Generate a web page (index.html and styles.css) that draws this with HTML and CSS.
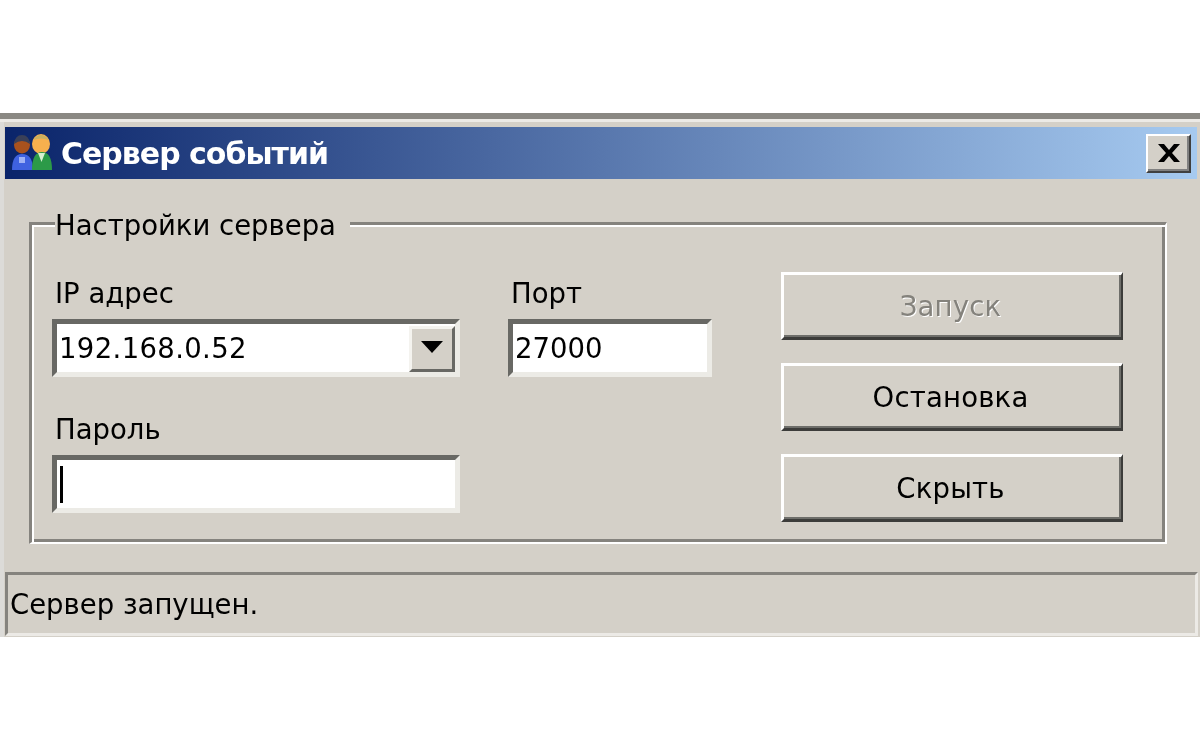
FILE: index.html
```html
<!DOCTYPE html>
<html lang="ru">
<head>
<meta charset="utf-8">
<title>Сервер событий</title>
<link rel="stylesheet" href="styles.css">
</head>
<body>
<div class="window">
  <div class="titlebar">
    <svg class="appicon" viewBox="0 0 42 38" width="42" height="38">
      <ellipse cx="10" cy="12" rx="8" ry="8.5" fill="#a8521e"/>
      <path d="M2 11 Q3 2 10 2 Q17 2 18 11 Q10 5 2 11Z" fill="#3a4058"/>
      <path d="M0 37 Q0 21 10 21 Q21 21 21 37Z" fill="#3f62e0"/>
      <path d="M7 24h6v6H7z" fill="#9fb2f5"/>
      <ellipse cx="29" cy="11" rx="9" ry="10" fill="#f7b04e"/>
      <path d="M21 7 Q29 -3 37 7 Q29 4 21 7Z" fill="#c8b060"/>
      <path d="M20 37 Q20 19 30 19 Q40 19 40 37Z" fill="#2c9a48"/>
      <path d="M26 20h7l-3.500 9z" fill="#d8f0d0"/>
    </svg>
    <span class="title">Сервер событий</span>
    <div class="close"><svg viewBox="0 0 24 20" width="24" height="20"><path d="M1 1h6l5 6 5-6h6l-8 9 8 9h-6l-5-6-5 6H1l8-9z" fill="#000"/></svg></div>
  </div>
  <div class="group">
    <span class="legend">Настройки сервера</span>
    <div class="fields">
      <div class="field">
        <label class="label">IP адрес</label>
        <div class="sunken combo"><span class="value wide">192.168.0.52</span>
          <div class="dropbtn"><svg class="arrow" viewBox="0 0 22 12" width="22" height="12"><path d="M0 0h22L11 12z" fill="#000"/></svg></div>
        </div>
      </div>
      <div class="field">
        <label class="label port">Порт</label>
        <div class="sunken"><span class="value">27000</span></div>
      </div>
      <div class="field">
        <label class="label">Пароль</label>
        <div class="sunken"><span class="caret"></span></div>
      </div>
    </div>
    <div class="buttons">
      <div class="btn disabled">Запуск</div>
      <div class="btn">Остановка</div>
      <div class="btn">Скрыть</div>
    </div>
  </div>
  <div class="status">Сервер запущен.</div>
</div>
</body>
</html>
```
FILE: styles.css
```css
html, body { margin: 0; padding: 0; background: #fff; }
body { width: 1200px; height: 750px; overflow: hidden; font-family: "DejaVu Sans", sans-serif; color: #000; }

.window {
  margin-top: 113px;
  height: 524px;
  box-sizing: border-box;
  background: #d4d0c8;
  border-top: 6px solid #8a8883;
  box-shadow: inset 0 3px 0 #eceae6, inset 4px 0 0 #dcdbd8;
  padding: 8px 2px 2px 5px;
  display: flex;
  flex-direction: column;
  filter: blur(0.4px);
}

.titlebar {
  height: 52px;
  flex: none;
  display: flex;
  align-items: center;
  padding: 0 6px 0 7px;
  background: linear-gradient(90deg, #0a246a 0%, #a6caf0 100%);
  margin-right: 1px;
}
.appicon { flex: none; margin-right: 8px; margin-top: -2px; }
.title { flex: 1; font-size: 30px; font-weight: bold; color: #fff; letter-spacing: -1px; margin-left: -1px; }
.close {
  width: 45px; height: 39px; box-sizing: border-box;
  display: flex; align-items: center; justify-content: center;
  background: #d4d0c8;
  border-style: solid; border-width: 2px 2px 2px 2px; border-color: #fff #404040 #404040 #fff;
  box-shadow: inset -2px -2px 0 #808080;
}

.group {
  position: relative;
  margin: 43px 31px 0 24px;
  height: 322px;
  flex: none;
  box-sizing: border-box;
  border-style: solid; border-width: 3px 2px 2px 3px; border-color: #85837e #fff #fff #85837e;
  box-shadow: inset 2px 2px 0 #fff, inset -3px -3px 0 #85837e;
  padding: 47px 42px 0 20px;
  display: flex;
  justify-content: space-between;
}
.legend {
  position: absolute;
  left: 23px; top: -18px;
  padding-right: 14px;
  background: #d4d0c8;
  font-size: 27.5px;
  line-height: 36px;
}

.fields {
  display: grid;
  grid-template-columns: 408px 204px;
  column-gap: 48px;
  row-gap: 31px;
  align-content: start;
}
.field { display: flex; flex-direction: column; }
.label { font-size: 27.5px; line-height: 42px; height: 47px; margin-left: 3px; }
.port { margin-left: 3px; }

.sunken {
  height: 58px; box-sizing: border-box;
  background: #fff;
  border: 5px solid; border-color: #686864 #ecebe6 #ecebe6 #686864;
  display: flex; align-items: center;
  padding-left: 2px;
}
.value { flex: 1; font-size: 27.5px; }
.wide { letter-spacing: 0.35px; }
.dropbtn {
  width: 46px; height: 46px; box-sizing: border-box;
  align-self: flex-end;
  display: flex; align-items: center; justify-content: center;
  background: #d4d0c8;
  border: 3px solid; border-color: #f4f3ef #686864 #686864 #f4f3ef;
}
.arrow { margin-bottom: 4px; }
.caret { width: 3px; height: 37px; background: #000; margin-left: 1px; }

.buttons { width: 342px; display: flex; flex-direction: column; gap: 23px; }
.btn {
  height: 68px; box-sizing: border-box;
  background: #d4d0c8;
  border-style: solid; border-width: 3px 2px 3px 3px; border-color: #fff #3c3c3a #3c3c3a #fff;
  box-shadow: inset -2px -2px 0 #6e6e6a;
  display: flex; align-items: center; justify-content: center;
  font-size: 27.5px;
  letter-spacing: 0.2px;
  padding-right: 4px;
}
.disabled { color: #84827c; text-shadow: 1px 1px 0 #fff; }

.status {
  height: 64px; box-sizing: border-box; flex: none;
  margin-top: 28px;
  border: 3px solid; border-color: #85837e #eceae6 #eceae6 #85837e;
  display: flex; align-items: center;
  padding-left: 2px;
  font-size: 27.5px;
}
```
